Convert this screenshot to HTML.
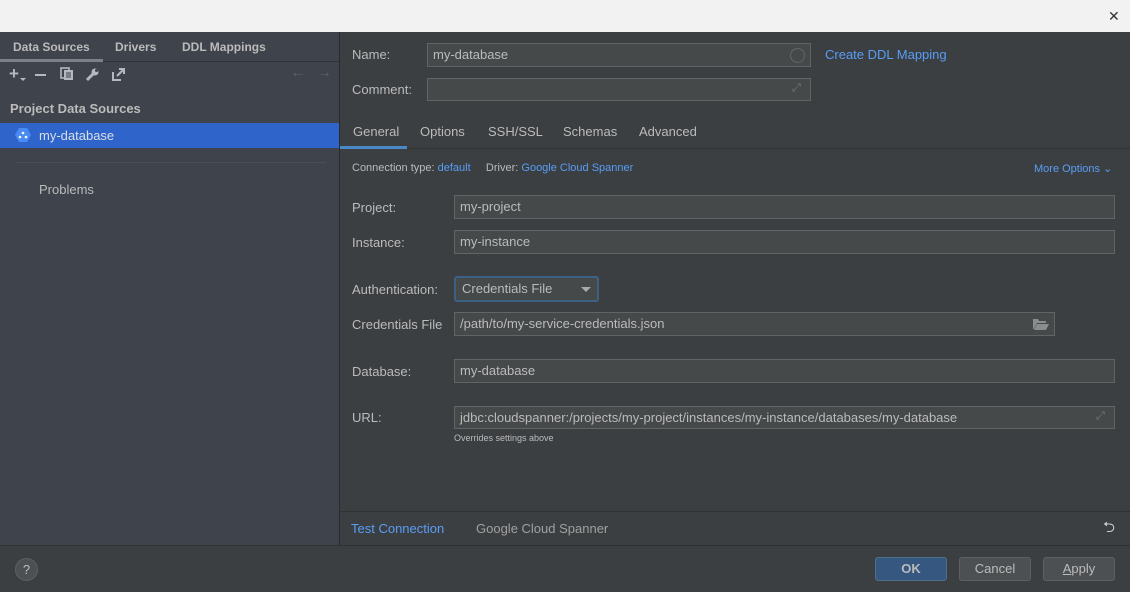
<!DOCTYPE html>
<html><head><style>
*{box-sizing:border-box;margin:0;padding:0}
body{width:1130px;height:592px;background:#3c3f41;font-family:"Liberation Sans",sans-serif;font-size:13px;color:#bbbbbb;position:relative;overflow:hidden}
.a{position:absolute}
.inp{position:absolute;background:#45494a;border:1px solid #646464;height:24px;padding:3px 5px;color:#bbbbbb;font-size:13px;line-height:16px}
.lbl{position:absolute;font-size:13px}
.link{color:#589df6}
.btn{position:absolute;height:24px;border:1px solid #5e6060;background:#4c5052;border-radius:3px;text-align:center;line-height:22px;color:#bbbbbb}
</style></head><body>
<div class="a" style="left:0;top:0;width:1130px;height:32px;background:#f2f2f2"></div>
<div class="a" style="left:1108px;top:8px;font-size:14px;color:#333">✕</div>

<div class="a" style="left:0;top:32px;width:339px;height:513px;background:#3e434c"></div>
<div class="a" style="left:339px;top:32px;width:1px;height:513px;background:#2b2b2b"></div>
<div class="a" style="left:0;top:545px;width:1130px;height:1px;background:#2f3133"></div>

<div class="a" style="left:13px;top:40px;font-weight:bold;font-size:12px">Data Sources</div>
<div class="a" style="left:115px;top:40px;font-weight:bold;font-size:12px">Drivers</div>
<div class="a" style="left:182px;top:40px;font-weight:bold;font-size:12px">DDL Mappings</div>
<div class="a" style="left:0;top:61px;width:339px;height:1px;background:#2f3236"></div>
<div class="a" style="left:0;top:59px;width:103px;height:3px;background:#7c8087"></div>

<div class="a" style="left:9px;top:64px;font-size:17px;color:#b4b8bf;font-weight:bold">+</div>
<div class="a" style="left:20px;top:78px;width:0;height:0;border:3px solid transparent;border-top-color:#b4b8bf"></div>
<div class="a" style="left:35px;top:74px;width:11px;height:2px;background:#b4b8bf"></div>
<svg class="a" style="left:60px;top:67px" width="14" height="14"><rect x="1" y="1" width="8" height="10" fill="none" stroke="#b4b8bf" stroke-width="1.6"/><rect x="4" y="3" width="9" height="10" fill="#b4b8bf"/><path d="M6 6h5M6 8h5M6 10h5" stroke="#3e434c"/></svg>
<svg class="a" style="left:85px;top:67px" width="15" height="15"><path d="M2 13 L8 7" stroke="#b4b8bf" stroke-width="3"/><circle cx="10" cy="5" r="3.5" fill="#b4b8bf"/><circle cx="11.5" cy="3.5" r="1.5" fill="#3e434c"/></svg>
<svg class="a" style="left:112px;top:67px" width="14" height="14"><path d="M1 5v8h8" fill="none" stroke="#b4b8bf" stroke-width="2"/><path d="M5 9L12 2M7 2h5v5" fill="none" stroke="#b4b8bf" stroke-width="2"/></svg>
<div class="a" style="left:290px;top:64px;color:#5c6067;font-size:16px">←</div>
<div class="a" style="left:316px;top:64px;color:#5c6067;font-size:16px">→</div>

<div class="a" style="left:10px;top:101px;font-weight:bold">Project Data Sources</div>
<div class="a" style="left:0;top:123px;width:339px;height:25px;background:#2f65ca"></div>
<svg class="a" style="left:15px;top:127px" width="16" height="16"><polygon points="4,1 12,1 16,8 12,15 4,15 0,8" fill="#4a8af4"/><circle cx="8" cy="6" r="1.3" fill="#fff"/><circle cx="5" cy="10" r="1.3" fill="#fff"/><circle cx="11" cy="10" r="1.3" fill="#fff"/></svg>
<div class="a" style="left:39px;top:128px;color:#d8dde6">my-database</div>
<div class="a" style="left:15px;top:162px;width:311px;height:1px;background:#4a4f57"></div>
<div class="a" style="left:39px;top:182px">Problems</div>

<div class="lbl" style="left:352px;top:47px">Name:</div>
<div class="inp" style="left:427px;top:43px;width:384px">my-database</div>
<div class="a" style="left:790px;top:48px;width:15px;height:15px;border:1px solid #666;border-radius:50%"></div>
<div class="a link" style="left:825px;top:47px">Create DDL Mapping</div>
<div class="lbl" style="left:352px;top:82px">Comment:</div>
<div class="inp" style="left:427px;top:78px;width:384px;height:23px"></div>
<div class="a" style="left:792px;top:82px;color:#777;font-size:11px">⤢</div>

<div class="lbl" style="left:353px;top:124px">General</div>
<div class="lbl" style="left:420px;top:124px">Options</div>
<div class="lbl" style="left:488px;top:124px">SSH/SSL</div>
<div class="lbl" style="left:563px;top:124px">Schemas</div>
<div class="lbl" style="left:639px;top:124px">Advanced</div>
<div class="a" style="left:340px;top:148px;width:790px;height:1px;background:#323232"></div>
<div class="a" style="left:340px;top:146px;width:67px;height:3px;background:#4a88c7"></div>

<div class="a" style="left:352px;top:162px;font-size:11px">Connection type: <span class="link">default</span>&nbsp;&nbsp;&nbsp;&nbsp; Driver: <span class="link">Google Cloud Spanner</span></div>
<div class="a link" style="left:1034px;top:162px;font-size:11px">More Options ⌄</div>

<div class="lbl" style="left:352px;top:200px">Project:</div>
<div class="inp" style="left:454px;top:195px;width:661px">my-project</div>
<div class="lbl" style="left:352px;top:235px">Instance:</div>
<div class="inp" style="left:454px;top:230px;width:661px">my-instance</div>

<div class="lbl" style="left:352px;top:282px">Authentication:</div>
<div class="a" style="left:454px;top:276px;width:145px;height:26px;border:2px solid #3d6185;border-radius:3px;background:#45494a;padding:3px 6px;line-height:16px">Credentials File</div>
<div class="a" style="left:581px;top:287px;width:0;height:0;border:5px solid transparent;border-top-color:#aaa"></div>

<div class="lbl" style="left:352px;top:317px">Credentials File</div>
<div class="inp" style="left:454px;top:312px;width:601px">/path/to/my-service-credentials.json</div>
<svg class="a" style="left:1033px;top:318px" width="16" height="12"><path d="M0 1h5l1 2h7v2H4L1 11H0z" fill="#8a8d90"/><path d="M4 6h12l-3 6H1z" fill="#8a8d90"/></svg>

<div class="lbl" style="left:352px;top:364px">Database:</div>
<div class="inp" style="left:454px;top:359px;width:661px">my-database</div>

<div class="lbl" style="left:352px;top:410px">URL:</div>
<div class="inp" style="left:454px;top:406px;width:661px;height:23px">jdbc:cloudspanner:/projects/my-project/instances/my-instance/databases/my-database</div>
<div class="a" style="left:1096px;top:410px;color:#777;font-size:11px">⤢</div>
<div class="a" style="left:454px;top:433px;font-size:9px">Overrides settings above</div>

<div class="a" style="left:340px;top:511px;width:790px;height:1px;background:#323232"></div>
<div class="a link" style="left:351px;top:521px">Test Connection</div>
<div class="a" style="left:476px;top:521px;color:#a0a0a0">Google Cloud Spanner</div>
<div class="a" style="left:1103px;top:517px;font-size:15px;color:#ccc">⮌</div>

<div class="a" style="left:15px;top:558px;width:23px;height:23px;border-radius:50%;background:#4c5052;border:1px solid #5e6060;text-align:center;line-height:21px;color:#bbb;font-size:13px">?</div>
<div class="btn" style="left:875px;top:557px;width:72px;background:#365880;border-color:#4c708c;font-weight:bold">OK</div>
<div class="btn" style="left:959px;top:557px;width:72px">Cancel</div>
<div class="btn" style="left:1043px;top:557px;width:72px"><u>A</u>pply</div>
</body></html>
